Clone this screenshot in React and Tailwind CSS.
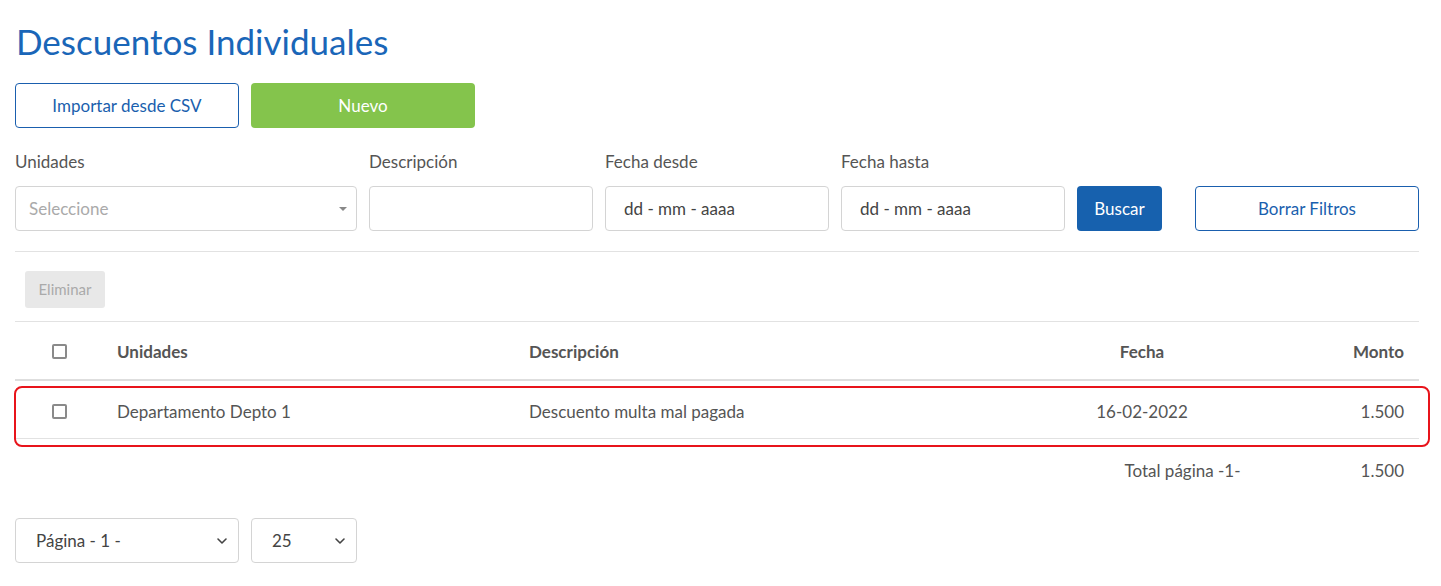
import React from "react";

const font = { fontFamily: "Lato, 'Noto Sans', sans-serif" };

const Chevron = () => (
  <svg width="12" height="12" viewBox="0 0 12 12" className="text-[#444]">
    <path d="M2 4l4 4 4-4" fill="none" stroke="currentColor" strokeWidth="1.6" strokeLinecap="round" strokeLinejoin="round" />
  </svg>
);

const Box = () => <span className="block w-[15px] h-[15px] border-2 border-[#8a8a8a] rounded-[2px] bg-white"></span>;

const Field = ({ label, children, w }) => (
  <div className={`flex flex-col gap-[14px] ${w}`}>
    <label className="text-[17px] text-[#555] leading-[20px]">{label}</label>
    {children}
  </div>
);

export default function App() {
  return (
    <div className="bg-white min-h-[586px] pl-[15px] pr-[22px] pt-[19px] text-[#555]" style={font}>
      <h1 className="text-[35px] leading-[44px] text-[#1a66b8] pl-[1px]">Descuentos Individuales</h1>

      <div className="flex gap-[12px] mt-[20px]">
        <button className="w-[224px] h-[45px] border border-[#1a5fae] rounded-[4px] text-[#1a5fae] text-[17px]">Importar desde CSV</button>
        <button className="w-[224px] h-[45px] bg-[#84c44c] rounded-[4px] text-white text-[17px]">Nuevo</button>
      </div>

      <div className="flex items-end gap-[12px] mt-[24px]">
        <Field label="Unidades" w="w-[342px]">
          <div className="h-[45px] border border-[#d4d4d4] rounded-[4px] flex items-center justify-between pl-[13px] pr-[9px]">
            <span className="text-[#aaa] text-[17px]">Seleccione</span>
            <span className="w-0 h-0 border-l-[4px] border-r-[4px] border-t-[4px] border-l-transparent border-r-transparent border-t-[#888]"></span>
          </div>
        </Field>
        <Field label="Descripción" w="w-[224px]">
          <div className="h-[45px] border border-[#d4d4d4] rounded-[4px]"></div>
        </Field>
        <Field label="Fecha desde" w="w-[224px]">
          <div className="h-[45px] border border-[#d4d4d4] rounded-[4px] flex items-center pl-[18px] text-[17px] text-[#444]">dd - mm - aaaa</div>
        </Field>
        <Field label="Fecha hasta" w="w-[224px]">
          <div className="h-[45px] border border-[#d4d4d4] rounded-[4px] flex items-center pl-[18px] text-[17px] text-[#444]">dd - mm - aaaa</div>
        </Field>
        <button className="w-[85px] h-[45px] bg-[#1761ae] rounded-[4px] text-white text-[17px]">Buscar</button>
        <button className="ml-[21px] w-[224px] h-[45px] border border-[#1a5fae] rounded-[4px] text-[#1a5fae] text-[17px]">Borrar Filtros</button>
      </div>

      <div className="border-t border-[#e2e2e2] mt-[20px] pt-[19px] pb-[13px] pl-[10px]">
        <button className="w-[80px] h-[37px] bg-[#e8e8e8] rounded-[3px] text-[#aaa] text-[15px]">Eliminar</button>
      </div>

      <div className="border-t border-[#e2e2e2]">
        <div className="grid grid-cols-[88px_412px_545px_164px_195px] items-center h-[59px] pt-[2px] border-b-2 border-[#dedede] font-bold text-[17px] text-[#555]">
          <div className="flex justify-center"><Box /></div>
          <div className="pl-[14px]">Unidades</div>
          <div className="pl-[14px]">Descripción</div>
          <div className="text-center">Fecha</div>
          <div className="text-right pr-[15px]">Monto</div>
        </div>
        <div className="relative grid grid-cols-[88px_412px_545px_164px_195px] items-center h-[58px] pt-[4px] border-b border-[#e2e2e2] text-[17px] text-[#555]">
          <div className="flex justify-center"><Box /></div>
          <div className="pl-[14px]">Departamento Depto 1</div>
          <div className="pl-[14px]">Descuento multa mal pagada</div>
          <div className="text-center">16-02-2022</div>
          <div className="text-right pr-[15px]">1.500</div>
          <div className="absolute left-[-1px] right-[-11px] top-[5px] bottom-[-9px] border-2 border-[#e8141b] rounded-[8px] pointer-events-none"></div>
        </div>
        <div className="flex justify-end items-center h-[63px] text-[17px] text-[#555]">
          <span className="mr-[120px]">Total página -1-</span>
          <span className="pr-[15px]">1.500</span>
        </div>
      </div>

      <div className="flex gap-[12px] mt-[16px]">
        <div className="w-[224px] h-[45px] border border-[#d4d4d4] rounded-[4px] flex items-center justify-between pl-[20px] pr-[10px] text-[17px] text-[#444]">
          <span>Página - 1 -</span>
          <Chevron />
        </div>
        <div className="w-[106px] h-[45px] border border-[#d4d4d4] rounded-[4px] flex items-center justify-between pl-[20px] pr-[10px] text-[17px] text-[#444]">
          <span>25</span>
          <Chevron />
        </div>
      </div>
    </div>
  );
}
